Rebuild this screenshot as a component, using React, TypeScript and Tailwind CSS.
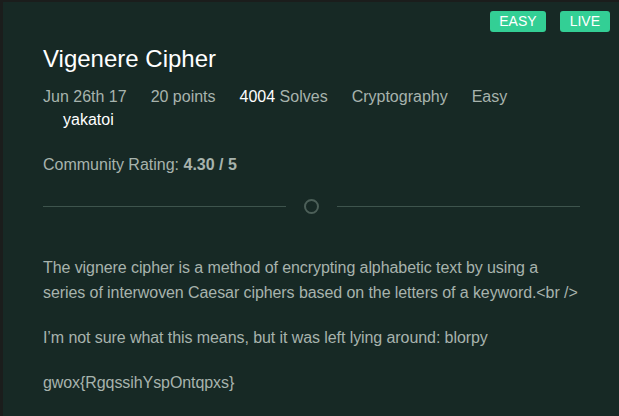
export default function App() {
  return (
    <div className="h-[416px] w-[619px] border-l-[3px] border-t-[2px] border-[#1b1d1c] bg-[#172925] font-['Liberation_Sans',Arial,sans-serif] text-[#a7b3ad] overflow-hidden">
      <div className="flex justify-end gap-[14px] pr-[9px] pt-[9px]">
        <span className="rounded-[3px] bg-[#33cf95] px-[9px] py-[2px] text-[14px] leading-[17px] text-white">EASY</span>
        <span className="rounded-[3px] bg-[#33cf95] px-[10px] py-[2px] text-[14px] leading-[17px] text-white">LIVE</span>
      </div>
      <div className="pl-[40px] pr-[39px]">
        <h1 className="mt-[12px] text-[24px] leading-[30px] text-white">Vigenere Cipher</h1>
        <div className="mt-[12px] flex gap-[24px] text-[16px] leading-[22px]">
          <span>Jun 26th 17</span>
          <span>20 points</span>
          <span>
            <span className="text-white">4004</span> Solves
          </span>
          <span>Cryptography</span>
          <span>Easy</span>
        </div>
        <div className="mt-[1px] pl-[20px] text-[16px] leading-[22px] text-white">yakatoi</div>
        <div className="mt-[23px] text-[16px] leading-[22px]">
          Community Rating: <b className="font-bold">4.30 / 5</b>
        </div>
        <div className="mt-[23px] flex items-center gap-[18px]">
          <div className="h-px flex-1 bg-[#3e544d]" />
          <div className="h-[15px] w-[15px] rounded-full border-2 border-[#4c5f58]" />
          <div className="h-px flex-1 bg-[#3e544d]" />
        </div>
        <div className="mt-[41px] text-[16px] leading-[25px] tracking-[-0.08px]">
          <p>
            The vignere cipher is a method of encrypting alphabetic text by using a series of interwoven Caesar ciphers based on the letters of a keyword.&lt;br /&gt;
          </p>
          <p className="mt-[20px]">I’m not sure what this means, but it was left lying around: blorpy</p>
          <p className="mt-[20px]">gwox{"{"}RgqssihYspOntqpxs{"}"}</p>
        </div>
      </div>
    </div>
  );
}
